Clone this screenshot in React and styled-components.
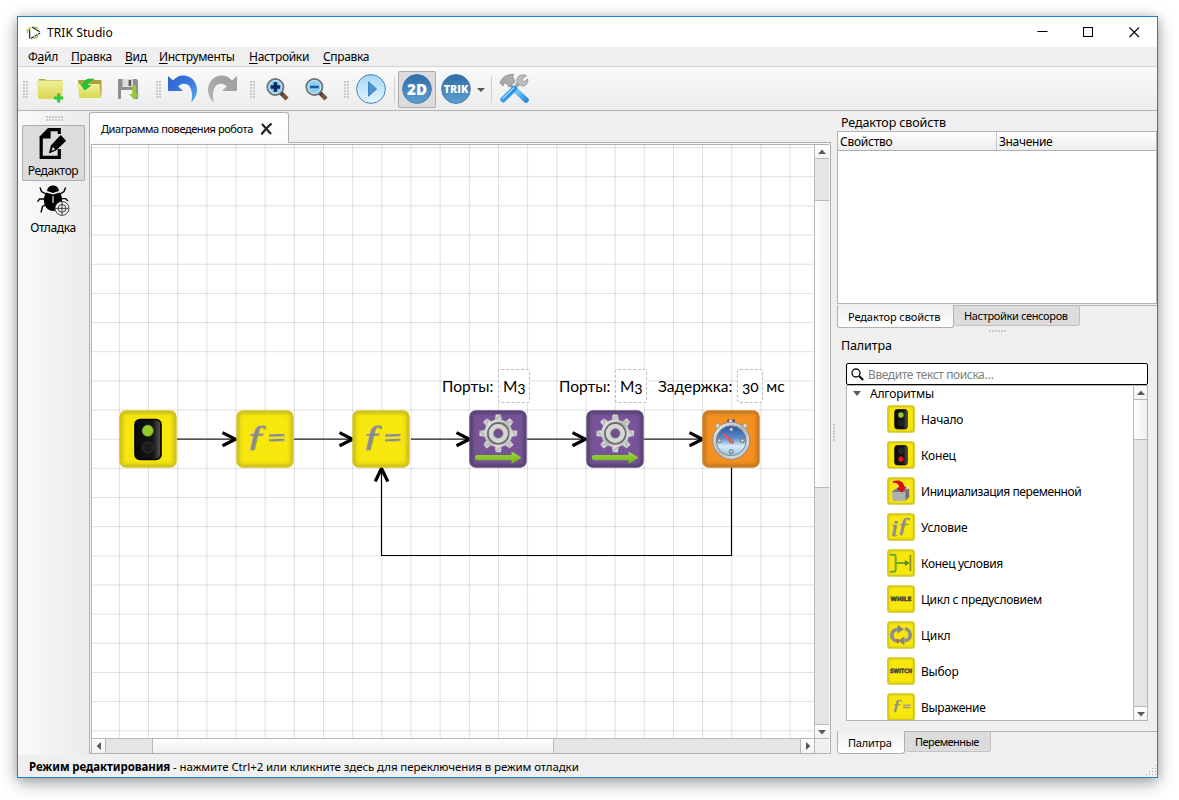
import React from 'react';
import styled, { createGlobalStyle, css } from 'styled-components';

const Global = createGlobalStyle`
  * { box-sizing: border-box; }
  body { margin: 0; background: #fff; min-height: 800px; display: flow-root; }
  svg { display: block; }
`;

const Window = styled.div`
  width: 1141px;
  height: 762px;
  margin: 16px 0 0 17px;
  border: 1px solid #1a80d4;
  background: #efefef;
  box-shadow: 0 5px 16px rgba(0, 0, 0, 0.36), 0 0 9px rgba(0, 0, 0, 0.12);
  display: flex;
  flex-direction: column;
  font: 12px/16px 'Noto Sans', 'Open Sans', sans-serif;
  color: #000;
`;

const Text = styled.span`
  white-space: nowrap;
  letter-spacing: ${(p) => p.$ls || 0}px;
  u { text-underline-offset: 2px; text-decoration-thickness: 1px; text-decoration-skip-ink: none; }
`;

const TitleBar = styled.div`
  height: 30px;
  flex: none;
  background: #fff;
  display: flex;
  align-items: center;
  padding: 1px 0 0 8px;
  ${Text} { flex: 1; margin-left: 5px; }
`;
const WindowControl = styled.div`
  width: 46px;
  display: flex;
  justify-content: center;
`;

const MenuBar = styled.div`
  height: 20px;
  flex: none;
  border-bottom: 1px solid #d4d4d4;
  display: flex;
  padding: 2px 0 0 10px;
`;
const MenuItem = styled(Text)`
  width: ${(p) => p.$w}px;
`;

const ToolBar = styled.div`
  height: 44px;
  flex: none;
  border-bottom: 1px solid #b4b4b4;
  background: linear-gradient(#fafafa, #ececec);
  display: flex;
  align-items: center;
  padding-top: 2px;
`;
const Grip = styled.div`
  flex: none;
  width: ${(p) => p.$w}px;
  height: ${(p) => p.$h}px;
  background: radial-gradient(circle at 1px 1px, #c6c6c6 0.7px, transparent 0.8px) 0 0 / 3px 3px;
  margin: ${(p) => p.$m || '0'};
`;
const ToolButton = styled.div`
  width: 38px;
  height: 37px;
  margin-right: 1px;
  flex: none;
  border-radius: 2px;
  ${(p) => p.$down && css`background: #dcdcdc; box-shadow: inset 0 0 0 1px #adadad;`}
`;
const Separator = styled.div`
  width: 1px;
  height: 25px;
  background: #cfcfcf;
  margin: ${(p) => p.$m};
`;
const MenuArrow = styled.div`
  border: 4px solid transparent;
  border-top-color: #555;
  border-bottom: 0;
  margin: 1px 6px 0 1px;
`;

const Body = styled.div`
  flex: 1;
  display: flex;
  min-height: 0;
`;

const ModeBar = styled.div`
  width: 71px;
  flex: none;
  background: linear-gradient(90deg, #fafafa, #ebebeb);
  display: flex;
  flex-direction: column;
  align-items: center;
  padding-right: 1px;
`;
const ModeButton = styled.div`
  width: 63px;
  height: 56px;
  margin-bottom: 1px;
  padding-top: 1px;
  border-radius: 2px;
  display: flex;
  flex-direction: column;
  align-items: center;
  ${(p) => p.$down && css`background: #dcdcdc; box-shadow: inset 0 0 0 1px #adadad;`}
  ${Text} { margin-top: 3px; }
`;

const Editor = styled.div`
  width: 742px;
  flex: none;
  display: flex;
  flex-direction: column;
  padding-top: 1px;
`;
const TabRow = styled.div`
  display: flex;
  height: 31px;
  flex: none;
`;
const EditorTab = styled.div`
  width: 200px;
  background: linear-gradient(#fff, #fafafa);
  border: 1px solid #b0b0b0;
  border-bottom: 0;
  border-radius: 3px 3px 0 0;
  display: flex;
  align-items: center;
  padding: 2px 0 0 11px;
  font-size: 11px;
`;
const TabRest = styled.div`
  flex: 1;
  border-bottom: 1px solid #b0b0b0;
`;
const Pane = styled.div`
  flex: 1;
  border: solid #b0b0b0;
  border-width: 0 1px 1px;
  background: #f7f7f7;
  padding: 1px 1px 0;
  margin-bottom: 1px;
`;
const Frame = styled.div`
  height: 609px;
  border: 1px solid #b0b0b0;
  display: grid;
  grid-template-columns: 722px 15px;
  grid-template-rows: 593px 15px;
`;
const Scene = styled.div`
  position: relative;
  overflow: hidden;
  background: #fff;
`;
const Node = styled.div`
  position: absolute;
  left: ${(p) => p.$x - 92}px;
  top: 265px;
`;
const NodeLabel = styled.div`
  position: absolute;
  left: ${(p) => p.$x - 92}px;
  top: 223px;
  height: 35px;
  display: flex;
  align-items: center;
  font: 15.5px/20px Lato, 'Noto Sans', sans-serif;
  font-feature-settings: 'onum' 1;
`;
const Field = styled.span`
  height: 34px;
  width: ${(p) => p.$w}px;
  margin: 0 3px 0 5px;
  border: 1px dashed #bdbdbd;
  border-radius: 3px;
  background: #fff;
  display: flex;
  align-items: center;
  justify-content: center;
`;

const ScrollTrack = styled.div`
  display: flex;
  background: #e5e5e5;
  flex-direction: ${(p) => (p.$v ? 'column' : 'row')};
  border: solid #b8b8b8;
  border-width: ${(p) => (p.$v ? '0 0 0 1px' : '1px 0 0 0')};
`;
const ScrollButton = styled.div`
  flex: none;
  width: ${(p) => p.$w || 14}px;
  height: ${(p) => p.$h || 14}px;
  background: linear-gradient(#fefefe, #f3f3f3);
  display: flex;
  align-items: center;
  justify-content: center;
`;
const ScrollThumb = styled.div`
  flex: none;
  background: ${(p) => (p.$v ? 'linear-gradient(90deg, #fefefe, #efefef)' : 'linear-gradient(#fefefe, #efefef)')};
  border: solid #b8b8b8;
  ${(p) => (p.$v
    ? css`border-width: 1px 0; height: ${p.$len}px; margin-top: ${p.$at}px;`
    : css`border-width: 0 1px; width: ${p.$len}px; margin-left: ${p.$at}px;`)}
`;
const Spacer = styled.div`flex: 1;`;
const Line = styled.div`
  flex: none;
  background: #b8b8b8;
  ${(p) => (p.$v ? 'width: 1px;' : 'height: 1px;')}
`;
const Corner = styled.div`
  border: solid #b8b8b8;
  border-width: 1px 0 0 1px;
  background: #f0f0f0;
`;

const Splitter = styled.div`
  width: 6px;
  flex: none;
  display: flex;
  align-items: center;
  justify-content: center;
`;
const Docks = styled.div`
  flex: 1;
  display: flex;
  flex-direction: column;
`;
const DockTitle = styled.div`
  font-size: 12.5px;
  height: 20px;
  padding: 4px 0 0 4px;
  margin-top: ${(p) => p.$mt || 0}px;
  flex: none;
`;
const Table = styled.div`
  height: 173px;
  flex: none;
  border: 1px solid #b4b4b4;
  background: #fff;
`;
const TableHead = styled.div`
  height: 19px;
  display: flex;
  background: linear-gradient(#fff, #ededed);
  border-bottom: 1px solid #b0b0b0;
  font-size: 12px;
  line-height: 19px;
`;
const HeadCell = styled.div`
  width: ${(p) => p.$w}px;
  padding-left: 2px;
  border-right: ${(p) => (p.$last ? 0 : '1px solid #c8c8c8')};
`;
const BottomTabs = styled.div`
  display: flex;
  height: 23px;
  flex: none;
  margin-top: ${(p) => p.$mt}px;
  background: linear-gradient(#b4b4b4, #b4b4b4) 0 0 / 100% 1px no-repeat;
  font-size: 11px;
`;
const BottomTab = styled.div`
  width: ${(p) => p.$w}px;
  height: ${(p) => (p.$on ? 23 : 21)}px;
  border: 1px solid #b0b0b0;
  border-radius: 0 0 3px 3px;
  display: flex;
  align-items: center;
  padding-left: 10px;
  ${(p) => (p.$on
    ? css`background: linear-gradient(#efefef, #fff); border-top: 0; padding-top: 2px;`
    : css`background: #dcdcdc; border-left: 0; border-color: #b4b4b4 #c2c2c2 #c2c2c2;`)}
`;
const PaletteBox = styled.div`
  margin: 9px 9px 0;
  flex: none;
`;
const Search = styled.div`
  height: 22px;
  border: 1px solid #000;
  border-radius: 2px;
  background: #fff;
  display: flex;
  align-items: center;
  color: #808080;
  gap: 4px;
  padding: 1px 0 0 4px;
`;
const Tree = styled.div`
  height: 336px;
  border: 1px solid #b4b4b4;
  background: #fff;
  display: flex;
`;
const TreeList = styled.div`
  flex: 1;
  overflow: hidden;
`;
const TreeGroup = styled.div`
  display: flex;
  align-items: center;
  height: 15px;
  padding-left: 6px;
  gap: 9px;
`;
const GroupArrow = styled.div`
  border: 4px solid transparent;
  border-top: 5px solid #5c5c5c;
  border-bottom: 0;
`;
const TreeItem = styled.div`
  display: flex;
  align-items: center;
  height: 36px;
  padding-left: 40px;
  gap: 6px;
  ${Text} { padding-top: 1px; }
`;
const StatusBar = styled.div`
  height: 22px;
  flex: none;
  display: flex;
  align-items: flex-end;
  padding: 0 0 0 11px;
  font-size: 11.5px;
`;
const StatusText = styled.div`
  flex: 1;
  height: 18px;
  b { font-weight: 700; }
`;
const SizeGrip = styled.svg`
  margin-bottom: 1px;
`;

/* ---------- block icons (58 x 58 grid) ---------- */

const TONES = {
  yellow: ['#d3c51c', '#fbe90c'],
  purple: ['#5d457a', '#7a559b'],
  orange: ['#cc7d22', '#f7941f'],
};

function Block({ tone = 'yellow', size = 58, children }) {
  const [edge, fill] = TONES[tone];
  return (
    <svg width={size} height={size} viewBox="0 0 58 58">
      <rect x="0.3" y="0.3" width="57.4" height="57.4" rx="6.5" fill={edge} />
      {[3.5, 4.5, 5.5, 6.5, 7.5].map((d) => (
        <rect key={d} x={d} y={d} width={58 - 2 * d} height={58 - 2 * d} rx="4" fill={fill} opacity="0.42" />
      ))}
      {children}
    </svg>
  );
}

const Light = ({ stop }) => (
  <g>
    <rect x="16" y="9.5" width="26" height="40" rx="5" fill="url(#lamp)" stroke="#000" strokeWidth="1.6" />
    <circle cx="28.8" cy="20.7" r="5.6" fill={stop ? '#262626' : '#95cb2c'} stroke={stop ? '#444' : '#6f9a20'} strokeWidth="0.6" />
    <circle cx="28.8" cy="37.5" r="5.4" fill={stop ? '#fb0d08' : '#1b1b1b'} stroke="#3c3c3c" strokeWidth="0.8" />
  </g>
);

const Formula = () => (
  <g fill="url(#metal)">
    <text transform="translate(10.5 35.3) scale(1.35 1)" fontFamily="Liberation Serif, serif" fontStyle="italic" fontSize="30"
      stroke="#929292" strokeWidth="1">ƒ</text>
    <rect x="33" y="24" width="15.5" height="2.6" />
    <rect x="33" y="28.8" width="15.5" height="2.6" />
  </g>
);

const Gear = () => (
  <g>
    <g fill="url(#steel)">
      {[0, 45, 90, 135, 180, 225, 270, 315].map((a) => (
        <path key={a} d="M25.8 10.5 L26.7 4.6 H31.9 L32.8 10.5 Z" transform={`rotate(${a} 29.3 23.4)`} />
      ))}
      <circle cx="29.3" cy="23.4" r="14" />
    </g>
    <circle cx="29.3" cy="23.4" r="10.4" fill="none" stroke="#6d6d6d" strokeWidth="1.8" />
    <circle cx="29.3" cy="23.4" r="7.4" fill="none" stroke="#d6d6d6" strokeWidth="4" />
    <circle cx="29.3" cy="23.4" r="4.6" fill="#70508f" stroke="#777" strokeWidth="0.6" />
    <path d="M8.5 45 H42.6 V41.4 L52.6 47.6 L42.6 54 V50.2 H8.5 A2.6 2.6 0 0 1 8.5 45Z" fill="url(#lime)" />
  </g>
);

const Timer = () => (
  <g>
    <rect x="25.2" y="9.2" width="7.8" height="4" rx="1" fill="#555" />
    <rect x="27" y="9.6" width="3.2" height="3" fill="#e2e2e2" />
    <path d="M13 15.5 l3 -2.4 3 3.6 -3 2.4z M45.6 15.5 l-3 -2.4 -3 3.6 3 2.4z" fill="#ddd" stroke="#888" strokeWidth="0.6" />
    <circle cx="29.2" cy="30.7" r="18.6" fill="url(#steel)" stroke="#8a8a8a" strokeWidth="1" />
    <circle cx="29.2" cy="30.7" r="15" fill="url(#dial)" stroke="#7d8794" strokeWidth="1" />
    {[[29.2, 19.4], [29.2, 41.6], [17.4, 30.6], [40.4, 30.6], [29.2, 31]].map(([x, y]) => (
      <circle key={`${x}-${y}`} cx={x} cy={y} r="1.9" fill="#d5d5d5" stroke="#5f6a75" strokeWidth="1" />
    ))}
    <path d="M21.6 24 L31.6 33.4" stroke="#f4504f" strokeWidth="2" />
  </g>
);

const Init = () => (
  <g>
    <path d="M10 31 L18 24 H46 L38 31Z" fill="#777" />
    <path d="M16 26 l3 -5 h9 M46 24 l3 -4 -10 0 -3 4z" fill="#e4e4e4" />
    <path d="M10 31 H38 V49 L12 50Z" fill="#b0b0b0" />
    <path d="M38 31 L46 24 V42 L38 49Z" fill="#6f6f6f" />
    <path d="M12 9 C22 5 35 8 36 20 L41 20 L31 32 L19 23 L25 21 C25 15 20 11 12 12Z" fill="#d0101c" />
  </g>
);

const If = () => (
  <g fill="url(#metal)" stroke="#8f8f8f" strokeWidth="1.4" fontFamily="Liberation Serif, serif" fontStyle="italic">
    <text transform="translate(8 47) scale(1.2 1)" fontSize="46">i</text>
    <text transform="translate(21 40) scale(1.3 1)" fontSize="42">ƒ</text>
  </g>
);

const EndIf = () => (
  <g fill="none" strokeWidth="4">
    <path d="M6 12 H14 Q18 12 18 17 V42 Q18 47 14 47 H6 M18 29 H40" stroke="#6aa82c" />
    <path d="M37 23 L47 29 L37 35Z" fill="#4c8f22" stroke="none" />
    <path d="M48.5 12 V46" stroke="#8f8a20" strokeWidth="3.4" />
  </g>
);

const Word = ({ sx, children }) => (
  <text transform={`translate(29 33.4) scale(${sx} 1)`} textAnchor="middle" fill="#45433a"
    stroke="#45433a" strokeWidth="1" fontFamily="DejaVu Sans, sans-serif" fontWeight="700" fontSize="12">{children}</text>
);

const Loop = () => (
  <g>
    <g fill="none" stroke="#8f8f8f" strokeWidth="7.5">
      <path d="M21 42 C6 39 6 19 23 17" />
      <path d="M37 16 C52 19 52 39 36 41" />
    </g>
    <path d="M22 8 L35 17 L22 26Z M36 32 L23 41 L36 50Z" fill="#858585" />
    <rect x="21" y="37" width="3" height="9" fill="#e02020" />
  </g>
);

const PALETTE = [
  { name: 'Начало', icon: <Light />, ls: -0.2 },
  { name: 'Конец', icon: <Light stop />, ls: -0.2 },
  { name: 'Инициализация переменной', icon: <Init />, ls: -0.41 },
  { name: 'Условие', icon: <If />, ls: -0.15 },
  { name: 'Конец условия', icon: <EndIf />, ls: -0.3 },
  { name: 'Цикл с предусловием', icon: <Word sx={1.0}>WHILE</Word>, ls: -0.27 },
  { name: 'Цикл', icon: <Loop />, ls: -0.1 },
  { name: 'Выбор', icon: <Word sx={0.86}>SWITCH</Word>, ls: -0.2 },
  { name: 'Выражение', icon: <Formula />, ls: -0.35 },
];

const NODES = [
  { x: 119.3, icon: <Light /> },
  { x: 236, icon: <Formula /> },
  { x: 352.3, icon: <Formula /> },
  { x: 469, tone: 'purple', icon: <Gear /> },
  { x: 585.8, tone: 'purple', icon: <Gear /> },
  { x: 702.4, tone: 'orange', icon: <Timer /> },
];

const Defs = () => (
  <svg width="0" height="0" style={{ position: 'absolute' }}>
    <defs>
      <linearGradient id="lamp"><stop offset="0" stopColor="#0a0a0a" /><stop offset="0.7" stopColor="#161616" /><stop offset="1" stopColor="#5a5a5a" /></linearGradient>
      <linearGradient id="metal" x1="0" y1="0" x2="1" y2="1"><stop offset="0" stopColor="#b5b5b5" /><stop offset="0.5" stopColor="#858585" /><stop offset="1" stopColor="#b8b49a" /></linearGradient>
      <linearGradient id="steel" x1="0" y1="0" x2="1" y2="1"><stop offset="0" stopColor="#f2f2f2" /><stop offset="0.5" stopColor="#b8b8b8" /><stop offset="0.75" stopColor="#dcdcdc" /><stop offset="1" stopColor="#999" /></linearGradient>
      <linearGradient id="lime" x1="0" y1="0" x2="0" y2="1"><stop offset="0" stopColor="#a4dc3c" /><stop offset="1" stopColor="#6fae1e" /></linearGradient>
      <linearGradient id="dial" x1="0" y1="0" x2="0" y2="1"><stop offset="0" stopColor="#2a54a6" /><stop offset="0.4" stopColor="#5a88c4" /><stop offset="0.68" stopColor="#d8ecf6" /><stop offset="1" stopColor="#8ec4de" /></linearGradient>
      <linearGradient id="folder" x1="0" y1="0" x2="0" y2="1"><stop offset="0" stopColor="#f0ee9c" /><stop offset="1" stopColor="#d9d850" /></linearGradient>
      <linearGradient id="undo" x1="0" y1="0" x2="1" y2="1"><stop offset="0" stopColor="#2b62d0" /><stop offset="0.5" stopColor="#3a76dc" /><stop offset="1" stopColor="#5cb0f4" /></linearGradient>
      <linearGradient id="redo" x1="0" y1="0" x2="1" y2="1"><stop offset="0" stopColor="#9c9c9c" /><stop offset="1" stopColor="#b4b4b4" /></linearGradient>
      <linearGradient id="play" x1="0" y1="0" x2="0" y2="1"><stop offset="0" stopColor="#a5d6f6" /><stop offset="1" stopColor="#e4f6ff" /></linearGradient>
      <linearGradient id="badge" x1="0" y1="0" x2="0" y2="1"><stop offset="0" stopColor="#2f6ea6" /><stop offset="1" stopColor="#5f9fd2" /></linearGradient>
      <linearGradient id="blue" x1="0" y1="0" x2="1" y2="1"><stop offset="0" stopColor="#7cc8f8" /><stop offset="1" stopColor="#2f8fdc" /></linearGradient>
    </defs>
  </svg>
);

const ToolSvg = ({ children }) => <svg width="38" height="37" viewBox="0 0 38 37">{children}</svg>;

const NewIcon = () => (
  <ToolSvg>
    <path d="M7 10 L8 8 H14 L15 9 H31 L32 12 L30 28 H8Z" fill="#b0aa3c" />
    <path d="M6 11 Q6 9.6 7.4 9.6 H31 Q32.4 9.6 32.2 11 L31 27 Q31 28 29.8 28 H8.4 Q7.3 28 7.2 27Z" fill="url(#folder)" />
    <path d="M27.6 22.5 V31.5 M23 27 H32.2" stroke="#2fcb3a" strokeWidth="3" />
  </ToolSvg>
);
const OpenIcon = () => (
  <ToolSvg>
    <path d="M8 9 H31.5 V24 L28 27 H10Z" fill="#aaa33a" />
    <path d="M7 13 H29.5 L31 27 H9.5Z" fill="url(#folder)" />
    <path d="M24 8.4 C17 7 13 10 13.4 14 L10.6 13 L14.8 19 L20.6 14.6 L17.6 14.4 C17.4 11.4 20 9.6 24 8.4Z" fill="#22c032" stroke="#22c032" strokeWidth="1" />
  </ToolSvg>
);
const SaveIcon = () => (
  <ToolSvg>
    <path d="M9 9 Q9 8 10 8 H27.5 L29 9.5 V27 Q29 28 28 28 H10 Q9 28 9 27Z" fill="#8e8e8e" />
    <rect x="13.5" y="8" width="10.5" height="8" fill="#dcdcdc" />
    <rect x="19.6" y="9" width="2.6" height="6" fill="#5a5a5a" />
    <rect x="12" y="19" width="13.5" height="9" fill="#f2f2f2" />
    <path d="M23.2 14.5 H27.2 V23 H30.5 L25.2 28.6 L20 23 H23.2Z" fill="#96c83c" />
  </ToolSvg>
);
const UNDO = 'M4 5 L9 9.6 C14 2.8 24 2.8 29.4 9 C35 16 34 25 27.2 31.6 C29 24 28 16.5 23.5 13.6 C20 11.8 17 12.6 14 15.3 L19 20 H4 Z';
const UndoIcon = () => <ToolSvg><path d={UNDO} fill="url(#undo)" /></ToolSvg>;
const RedoIcon = () => <ToolSvg><path d={UNDO} transform="translate(38 0) scale(-1 1)" fill="url(#redo)" /></ToolSvg>;
const ZoomIcon = ({ plus }) => (
  <ToolSvg>
    <path d="M22.5 21.5 L29 28" stroke="#7b5231" strokeWidth="4.4" />
    <path d="M22 21 L24.5 23.5" stroke="#333" strokeWidth="3.4" />
    <circle cx="17.4" cy="16" r="8" fill="#8fd0f2" stroke="#6e7276" strokeWidth="2" />
    <circle cx="17.4" cy="16" r="6.6" fill="none" stroke="#c9ecff" strokeWidth="1" />
    <path d={plus ? 'M17.4 11.2 V20.8 M12.6 16 H22.2' : 'M13 16 H21.8'} stroke={plus ? '#0b2a5c' : '#1e5f9e'} strokeWidth={plus ? 3.6 : 2.6} />
  </ToolSvg>
);
const PlayIcon = () => (
  <ToolSvg>
    <circle cx="19" cy="18" r="14.4" fill="url(#play)" stroke="#4583b8" strokeWidth="1" />
    <path d="M16.5 10.8 L24.6 18 L16.5 25.2Z" fill="#4a94d0" stroke="#2f74b2" strokeWidth="0.8" />
  </ToolSvg>
);
const BadgeIcon = ({ label, size, w }) => (
  <ToolSvg>
    <circle cx="19" cy="18" r="14.4" fill="url(#badge)" stroke="#3572a8" strokeWidth="0.8" />
    <text x="19" y={18 + size * 0.36} textAnchor="middle" textLength={w} lengthAdjust="spacingAndGlyphs"
      fill="#fff" fontFamily="Open Sans, Noto Sans, sans-serif" fontWeight="800" fontSize={size}>{label}</text>
  </ToolSvg>
);
const ToolsIcon = () => (
  <ToolSvg>
    <path d="M14.5 13 L20 19" stroke="#9a9a9a" strokeWidth="3" />
    <path d="M21.5 20 L31 29" stroke="url(#blue)" strokeWidth="5.6" strokeLinecap="round" />
    <path d="M21 15 L25 11.5" stroke="#a9a9a9" strokeWidth="4" />
    <path d="M19.5 17.5 L8.2 28.6" stroke="#2f96e2" strokeWidth="5.6" strokeLinecap="round" />
    <path d="M18.5 17 L8 27.4" stroke="#8ed2fb" strokeWidth="1.6" strokeLinecap="round" />
    <path d="M5 12 C7 6 12 3 19 3.4 L17.5 5 L20 11 L14 16 L11.5 12.5 L9 12 L8 15Z" fill="#ababab" stroke="#858585" strokeWidth="0.7" />
    <path d="M31.5 4.5 L27 8.6 L28.6 11 L32.6 8 C34 12 30 16.4 25.6 14.6 L22 12 C20.6 7 24.6 2 31.5 4.5Z" fill="#bdbdbd" stroke="#8a8a8a" strokeWidth="0.7" />
  </ToolSvg>
);

const LogoIcon = () => (
  <svg width="16" height="16" viewBox="0 0 16 16" fill="none">
    <path d="M3.6 4.5 V13.4 M6 2 L13.6 6.6" stroke="#22384a" strokeWidth="1.3" />
    <path d="M5 13.4 L14.2 8" stroke="#22384a" strokeWidth="1.3" strokeDasharray="3.4 0.8" />
    <path d="M1.4 8 V5.6 L4.6 2.2 M8.4 1.6 L11 3 V5 M7.4 13.4 L11 12.4 L12 9.8" stroke="#a6cc2c" strokeWidth="1.5" />
  </svg>
);
const EditIcon = () => (
  <svg width="34" height="34" viewBox="0 0 34 34">
    <path d="M13.5 3.6 H23.3 V8 M23.3 23 V31.4 H5.2 V11.5" fill="none" stroke="#000" strokeWidth="3.2" />
    <path d="M3.6 12.6 V10.4 L12 2 H14.6 V12.6Z" fill="#000" />
    <path d="M24.6 9 L30.2 14.8 L20 24.6 L12.8 27.4 L15 19.2Z" fill="#000" />
    <path d="M17 21 L19.2 23.4 L15.4 24.8Z" fill="#dcdcdc" />
  </svg>
);
const BugIcon = () => (
  <svg width="34" height="34" viewBox="0 0 34 34">
    <g fill="none" stroke="#000" strokeWidth="1.4">
      <path d="M10 11 L5.5 8.5 L4 4.5 M9.5 16 H3.6 L1.5 18.6 M11 21 L6.5 23.5 L5 29.5 M24 11 L28 8.5 L29.6 4.5 M24.6 15.6 H29.6 L32 18" />
    </g>
    <path d="M11 8 C12 0.8 22 0.8 23 8 L17 10Z" fill="#000" />
    <path d="M10 9.4 L17 11.6 L24 9.4 C28 16 26.4 27 17 28 C7.6 27 6 16 10 9.4Z" fill="#000" />
    <path d="M17 13 V20" stroke="#fff" strokeWidth="1.1" />
    <circle cx="26" cy="25.4" r="7" fill="#efefef" stroke="#333" strokeWidth="0.9" />
    <circle cx="26" cy="25.4" r="3.9" fill="none" stroke="#333" strokeWidth="0.9" />
    <path d="M26 19 V32 M19.4 25.4 H32.6" stroke="#333" strokeWidth="0.9" />
  </svg>
);

const Tri = ({ dir }) => {
  const d = { up: 'M0 6 L4 1.6 L8 6Z', down: 'M0 2 L4 6.4 L8 2Z', left: 'M6 0 L1.6 4 L6 8Z', right: 'M2 0 L6.4 4 L2 8Z' }[dir];
  return <svg width="8" height="8" viewBox="0 0 8 8"><path d={d} fill="#5a5a5a" /></svg>;
};

const range = (n) => Array.from({ length: n }, (_, i) => i);

function Wiring() {
  return (
    <svg width="722" height="593" viewBox="92 145 722 593" fill="none">
      <g stroke="#000" strokeOpacity="0.12">
        {range(24).map((i) => <path key={i} d={`M${119.4 + 29.16 * i} 145 V738`} />)}
        {range(21).map((i) => <path key={i} d={`M92 ${147.6 + 29.16 * i} H814`} />)}
      </g>
      {[177, 294, 411, 527, 644].map((x) => (
        <g key={x}>
          <path d={`M${x} 439.2 H${x + 57}`} stroke="#222" strokeWidth="1.3" />
          <path d={`M${x + 45.5} 432.6 L${x + 58.5} 439.2 L${x + 45.5} 445.8`} stroke="#000" strokeWidth="3.2" />
        </g>
      ))}
      <path d="M731.5 467 V555.5 H381.5 V470" stroke="#000" strokeWidth="1.2" />
      <path d="M375.2 481.5 L381.5 468.5 L387.8 481.5" stroke="#000" strokeWidth="3.2" />
    </svg>
  );
}

export default function App() {
  return (
    <>
      <Global />
      <Defs />
      <Window>
        <TitleBar>
          <LogoIcon />
          <Text $ls={0.1}>TRIK Studio</Text>
          <WindowControl><svg width="11" height="11"><path d="M0.5 4.5 H10.5" stroke="#000" /></svg></WindowControl>
          <WindowControl><svg width="11" height="11"><rect x="0.5" y="0.5" width="9" height="9" fill="none" stroke="#000" /></svg></WindowControl>
          <WindowControl><svg width="11" height="11"><path d="M0.5 0.5 L10 10 M10 0.5 L0.5 10" stroke="#000" strokeWidth="1.1" /></svg></WindowControl>
        </TitleBar>
        <MenuBar>
          <MenuItem $w={43} $ls={-0.2}>Ф<u>а</u>йл</MenuItem>
          <MenuItem $w={54} $ls={-0.25}><u>П</u>равка</MenuItem>
          <MenuItem $w={34} $ls={-0.2}><u>В</u>ид</MenuItem>
          <MenuItem $w={90} $ls={-0.3}><u>И</u>нструменты</MenuItem>
          <MenuItem $w={74} $ls={-0.3}><u>Н</u>астройки</MenuItem>
          <MenuItem $w={60} $ls={-0.35}><u>С</u>правка</MenuItem>
        </MenuBar>
        <ToolBar>
          <Grip $w={6} $h={18} $m="0 2px 0 5px" />
          <ToolButton><NewIcon /></ToolButton>
          <ToolButton><OpenIcon /></ToolButton>
          <ToolButton><SaveIcon /></ToolButton>
          <Grip $w={6} $h={18} $m="0 2px 0 8px" />
          <ToolButton><UndoIcon /></ToolButton>
          <ToolButton><RedoIcon /></ToolButton>
          <Grip $w={6} $h={18} $m="0 2px 0 8px" />
          <ToolButton><ZoomIcon plus /></ToolButton>
          <ToolButton><ZoomIcon /></ToolButton>
          <Grip $w={6} $h={18} $m="0 2px 0 8px" />
          <ToolButton><PlayIcon /></ToolButton>
          <Separator $m="0 3px" />
          <ToolButton $down><BadgeIcon label="2D" size={16} w={20} /></ToolButton>
          <ToolButton><BadgeIcon label="TRIK" size={10} w={24.5} /></ToolButton>
          <MenuArrow />
          <Separator $m="0 3px 0 0" />
          <ToolButton><ToolsIcon /></ToolButton>
        </ToolBar>
        <Body>
          <ModeBar>
            <Grip $w={18} $h={6} $m="5px 0 3px 3px" />
            <ModeButton $down><EditIcon /><Text $ls={-0.42}>Редактор</Text></ModeButton>
            <ModeButton><BugIcon /><Text $ls={-0.4}>Отладка</Text></ModeButton>
          </ModeBar>
          <Editor>
            <TabRow>
              <EditorTab>
                <Text $ls={-0.42}>Диаграмма поведения робота</Text>
                <svg width="13" height="12" viewBox="0 0 13 12" style={{ marginLeft: 7 }}>
                  <path d="M2 1 L11 11 M11.6 0.6 C8 3 5 7 1.4 11.4" fill="none" stroke="#222" strokeWidth="2.2" />
                </svg>
              </EditorTab>
              <TabRest />
            </TabRow>
            <Pane>
              <Frame>
                <Scene>
                  <Wiring />
                  {NODES.map((n) => <Node key={n.x} $x={n.x}><Block tone={n.tone}>{n.icon}</Block></Node>)}
                  <NodeLabel $x={442}><Text>Порты:</Text><Field $w={32}>M3</Field></NodeLabel>
                  <NodeLabel $x={559}><Text>Порты:</Text><Field $w={32}>M3</Field></NodeLabel>
                  <NodeLabel $x={658}><Text>Задержка:</Text><Field $w={26}>30</Field><Text>мс</Text></NodeLabel>
                </Scene>
                <ScrollTrack $v>
                  <ScrollButton $h={13}><Tri dir="up" /></ScrollButton>
                  <Line />
                  <ScrollThumb $v $len={288} $at={41} />
                  <Spacer />
                  <Line />
                  <ScrollButton $h={13}><Tri dir="down" /></ScrollButton>
                </ScrollTrack>
                <ScrollTrack>
                  <ScrollButton $w={13}><Tri dir="left" /></ScrollButton>
                  <Line $v />
                  <ScrollThumb $len={402} $at={46} />
                  <Spacer />
                  <Line $v />
                  <ScrollButton $w={13}><Tri dir="right" /></ScrollButton>
                </ScrollTrack>
                <Corner />
              </Frame>
            </Pane>
          </Editor>
          <Splitter><Grip $w={3} $h={18} /></Splitter>
          <Docks>
            <DockTitle><Text $ls={-0.12}>Редактор свойств</Text></DockTitle>
            <Table>
              <TableHead>
                <HeadCell $w={159}><Text $ls={-0.25}>Свойство</Text></HeadCell>
                <HeadCell $last><Text $ls={-0.35}>Значение</Text></HeadCell>
              </TableHead>
            </Table>
            <BottomTabs $mt={1}>
              <BottomTab $on $w={117}><Text $ls={-0.1}>Редактор свойств</Text></BottomTab>
              <BottomTab $w={126}><Text $ls={-0.34}>Настройки сенсоров</Text></BottomTab>
            </BottomTabs>
            <Grip $w={18} $h={3} $m="2px auto 0 152px" />
            <DockTitle $mt={1}><Text $ls={-0.12}>Палитра</Text></DockTitle>
            <PaletteBox>
              <Search>
                <svg width="13" height="13" viewBox="0 0 13 13" fill="none" stroke="#111">
                  <circle cx="5" cy="5" r="4" strokeWidth="1.4" /><path d="M8 8 L12.2 12" strokeWidth="2.2" />
                </svg>
                <Text $ls={-0.4}>Введите текст поиска…</Text>
              </Search>
              <Tree>
                <TreeList>
                  <TreeGroup><GroupArrow /><Text $ls={-0.2}>Алгоритмы</Text></TreeGroup>
                  {PALETTE.map((p) => (
                    <TreeItem key={p.name}><Block size={28}>{p.icon}</Block><Text $ls={p.ls}>{p.name}</Text></TreeItem>
                  ))}
                </TreeList>
                <ScrollTrack $v>
                  <ScrollButton $w={13} $h={13}><Tri dir="up" /></ScrollButton>
                  <ScrollThumb $v $len={41} $at={0} />
                  <Spacer />
                  <Line />
                  <ScrollButton $w={13} $h={13}><Tri dir="down" /></ScrollButton>
                </ScrollTrack>
              </Tree>
            </PaletteBox>
            <BottomTabs $mt={10}>
              <BottomTab $on $w={68}><Text $ls={-0.25}>Палитра</Text></BottomTab>
              <BottomTab $w={86}><Text $ls={-0.55}>Переменные</Text></BottomTab>
            </BottomTabs>
          </Docks>
        </Body>
        <StatusBar>
          <StatusText><Text $ls={-0.09}><b>Режим редактирования</b> - нажмите Ctrl+2 или кликните здесь для переключения в режим отладки</Text></StatusText>
          <SizeGrip width="12" height="12" viewBox="0 0 12 12" fill="#b0b0b0">
            {[[10, 1], [7, 4], [10, 4], [4, 7], [7, 7], [10, 7], [1, 10], [4, 10], [7, 10], [10, 10]].map(([x, y]) => (
              <rect key={`${x}-${y}`} x={x} y={y} width="1" height="1" />
            ))}
          </SizeGrip>
        </StatusBar>
      </Window>
    </>
  );
}
